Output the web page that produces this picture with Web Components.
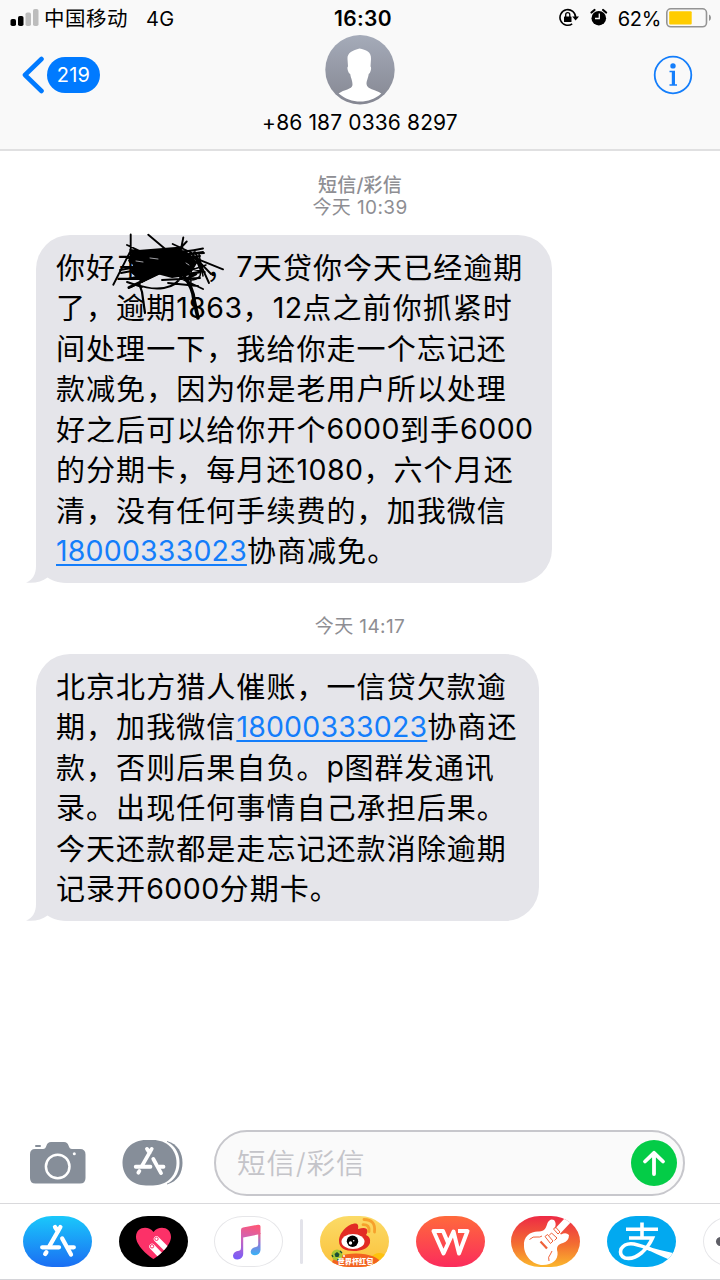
<!DOCTYPE html>
<html lang="zh-CN">
<head>
<meta charset="utf-8">
<title>+86 187 0336 8297</title>
<style>
  html, body { margin: 0; height: 100%; }
  body {
    width: 720px;
    height: 1280px;
    overflow: hidden;
    background: #fff;
    color: #000;
    font-family: Inter, "Noto Sans CJK SC", sans-serif;
  }
</style>
</head>
<body>
<message-screen>
  <status-bar slot="top" carrier="中国移动" network="4G" time="16:30" battery="62"></status-bar>
  <chat-header slot="top" unread="219">+86 187 0336 8297</chat-header>

  <time-stamp date="今天" time="10:39">短信/彩信</time-stamp>
  <message-bubble width="516">
    <p>你好王<hidden-name></hidden-name>，<lat-in>7</lat-in>天贷你今天已经逾期</p>
    <p>了，逾期<lat-in>1863</lat-in>，<lat-in>12</lat-in>点之前你抓紧时</p>
    <p>间处理一下，我给你走一个忘记还</p>
    <p>款减免，因为你是老用户所以处理</p>
    <p>好之后可以给你开个<lat-in>6000</lat-in>到手<lat-in>6000</lat-in></p>
    <p>的分期卡，每月还<lat-in>1080</lat-in>，六个月还</p>
    <p>清，没有任何手续费的，加我微信</p>
    <p><lat-in link>18000333023</lat-in>协商减免。</p>
    <pen-scribble slot="overlay"></pen-scribble>
  </message-bubble>

  <time-stamp date="今天" time="14:17"></time-stamp>
  <message-bubble width="503">
    <p>北京北方猎人催账，一信贷欠款逾</p>
    <p>期，加我微信<lat-in link>18000333023</lat-in>协商还</p>
    <p>款，否则后果自负。<lat-in>p</lat-in>图群发通讯</p>
    <p>录。出现任何事情自己承担后果。</p>
    <p>今天还款都是走忘记还款消除逾期</p>
    <p>记录开<lat-in>6000</lat-in>分期卡。</p>
  </message-bubble>

  <compose-bar slot="bottom">短信/彩信</compose-bar>
  <app-strip slot="bottom">
    <app-pill name="store"></app-pill>
    <app-pill name="touch"></app-pill>
    <app-pill name="music"></app-pill>
    <strip-divider></strip-divider>
    <app-pill name="weibo"></app-pill>
    <app-pill name="wps"></app-pill>
    <app-pill name="garage"></app-pill>
    <app-pill name="alipay"></app-pill>
    <app-pill name="more"></app-pill>
  </app-strip>
</message-screen>

<script>
// Small helper: every element below only needs an open root with some markup.
function define(name, render) {
    window.customElements.define(name, class extends HTMLElement {
        constructor() {
            super();
            this._root = this.attachShadow({ mode: 'open' });
            this._root.innerHTML = render(this);
        }
    });
}

// "A" made of three rounded sticks, shared by the compose bar and the strip
const storeGlyph = `
    <g fill="none" stroke="#fff" stroke-width="4.3" stroke-linecap="round">
      <path d="M32 11L35 15.500M39.200 22.500L48 38.500M37.400 11L26.500 30M23.400 36.200L22.200 38"/>
      <path d="M19.200 31.300H36M46 31.300H50.800"/>
    </g>`;

define('message-screen', () => `
    <style>
      :host { display: flex; flex-direction: column; height: 1280px; }
      header { height: 149px; background: #f9f9f9; border-bottom: 2px solid #e0e0e1; flex: none; }
      main { flex: 1; min-height: 0; padding-top: 23px; }
    </style>
    <header><slot name="top"></slot></header>
    <main><slot></slot></main>
    <slot name="bottom"></slot>`);

define('status-bar', (el) => `
    <style>
      :host { display: grid; grid-template-columns: 1fr auto 1fr; height: 36px; align-items: center; font-size: 20px; }
      div { display: flex; align-items: center; }
      .left { padding-left: 10px; }
      .carrier { margin-left: 5px; padding-top: 2px; font-size: 20.500px; letter-spacing: .5px; line-height: 34px; }
      .net { margin-left: 18px; padding-top: 1px; letter-spacing: .4px; }
      .time { font-weight: 600; font-size: 21px; letter-spacing: .35px; padding: 1px 0 0 6px; }
      .right { justify-content: flex-end; padding-right: 8px; }
      .pct { margin: 0 5px 0 10px; padding-top: 1px; letter-spacing: -.3px; }
      svg { display: block; }
    </style>
    <div class="left">
      <svg width="29" height="18" viewBox="0 0 29 18">
        <rect x=".5" y="10" width="5.500" height="7" rx="1.800"/>
        <rect x="8" y="7" width="5.500" height="10" rx="1.800"/>
        <rect x="15.500" y="3.500" width="5.500" height="13.500" rx="1.800" fill="#bdbdbd"/>
        <rect x="23" y="0" width="5.500" height="17" rx="1.800" fill="#bdbdbd"/>
      </svg>
      <span class="carrier">${el.getAttribute('carrier')}</span>
      <span class="net">${el.getAttribute('network')}</span>
    </div>
    <span class="time">${el.getAttribute('time')}</span>
    <div class="right">
      <svg width="49" height="20" viewBox="0 0 49 20">
        <path d="M13.200 15.900A7.800 7.800 0 1 1 16.600 9.500" fill="none" stroke="#000" stroke-width="1.600"/>
        <path d="M13.200 8.500H20L16.600 12.500Z"/>
        <rect x="5" y="8.500" width="7.500" height="5.600" rx=".6"/>
        <path d="M6.700 9V6.700a2.050 2.050 0 0 1 4.100 0V9" fill="none" stroke="#000" stroke-width="1.300"/>
        <circle cx="39.800" cy="10.200" r="7.300"/>
        <path d="M32.500 4.500L35.500 2M47.100 4.500L44.100 2" stroke="#000" stroke-width="2.200" stroke-linecap="round"/>
        <path d="M40.300 5.500V10.500H36" fill="none" stroke="#f9f9f9" stroke-width="1.300"/>
      </svg>
      <span class="pct">${el.getAttribute('battery')}%</span>
      <svg width="46" height="20" viewBox="0 0 46 20">
        <rect x=".8" y=".8" width="39.700" height="18" rx="4" fill="none" stroke="#949494" stroke-width="1.600"/>
        <rect x="3.200" y="3.200" width="22.500" height="13.200" rx="1" fill="#fc0"/>
        <path d="M43 6.500Q45 7.500 45 9.800T43 13Z" fill="#949494"/>
      </svg>
    </div>`);

define('chat-header', (el) => `
    <style>
      :host { display: grid; grid-template-columns: 1fr auto 1fr; height: 113px; align-items: start; }
      .back { display: flex; align-items: center; padding: 20px 0 0 22px; gap: 3px; }
      .badge { width: 53px; height: 36px; border-radius: 18px; background: #007aff; color: #fff; font-size: 20px; line-height: 36px; text-align: center; letter-spacing: .2px; }
      .contact { display: flex; flex-direction: column; align-items: center; font-size: 21px; }
      .avatar { margin-top: -1px; }
      .name { margin-top: 5px; line-height: 26px; letter-spacing: .13px; }
      .info { justify-self: end; padding: 19px 27px 0 0; }
      svg { display: block; }
    </style>
    <div class="back">
      <svg width="22" height="38" viewBox="0 0 22 38"><path d="M19.500 3L3 19L19.500 35" fill="none" stroke="#007aff" stroke-width="4.600" stroke-linecap="round" stroke-linejoin="round"/></svg>
      <span class="badge">${el.getAttribute('unread')}</span>
    </div>
    <div class="contact">
      <svg class="avatar" width="70" height="70" viewBox="0 0 70 70">
        <defs><linearGradient id="g" x2="0" y2="1"><stop stop-color="#a5abb9"/><stop offset="1" stop-color="#858792"/></linearGradient></defs>
        <circle cx="35" cy="34.700" r="34.700" fill="url(#g)"/>
        <path d="M22.500 24C22 17.500 28 15.500 34.500 13.500C41 15 46.500 16.500 46 24L45.500 31.500C47 32 45.500 38.500 43.700 39C43 44 41.500 45 41.500 49C42 54.500 50 54 56.300 58.500C44 69.500 26 69 13.600 58.500C19 54.500 27 54.500 27.500 50C27.500 45 26 44 25.200 39C23.300 38.500 21.500 32 23 31.500Z" fill="#fff"/>
      </svg>
      <span class="name"><slot></slot></span>
    </div>
    <svg class="info" width="40" height="40" viewBox="0 0 40 40">
      <circle cx="20" cy="20" r="18.300" fill="none" stroke="#147efb" stroke-width="1.800"/>
      <circle cx="20" cy="10.900" r="2.700" fill="#147efb"/>
      <path d="M16.500 15.800H22V29.300H24V30.700H16.500V29.300H18.800V17.200H16.500Z" fill="#147efb"/>
    </svg>`);

define('time-stamp', (el) => `
    <style>
      :host { display: flex; flex-direction: column; align-items: center; position: relative; top: 1px; color: #8e8e93; font-size: 19px; line-height: 22px; letter-spacing: .2px; }
      .label { font-weight: 500; }
      .when { letter-spacing: .4px; }
    </style>
    <span class="label"><slot></slot></span>
    <span class="when">${el.getAttribute('date')} ${el.getAttribute('time')}</span>`);

define('message-bubble', (el) => `
    <style>
      :host { display: block; position: relative; z-index: 0; box-sizing: border-box; width: ${el.getAttribute('width')}px; margin: 17px 0 32px 36px; padding: 13.500px 0 10.500px 20px; background: #e5e5ea; border-radius: 34px; font-size: 29px; line-height: 40.500px; letter-spacing: 1.060px; white-space: nowrap; }
      ::slotted(p) { margin: 0; height: 40.500px; }
      .tail { position: absolute; z-index: -1; left: -10px; bottom: 0; }
    </style>
    <svg class="tail" width="45" height="35" viewBox="0 0 45 35"><path d="M10 0V18C10 26 7 32 0 34.500C8 35.500 16 34 21.500 29.500C28 34 35 35 45 35V0Z" fill="#e5e5ea"/></svg>
    <slot></slot>
    <slot name="overlay"></slot>`);

// Digits and latin letters run on their own metrics inside a message.
// Kept on one line: a line break in the root would show up as a space in the text.
define('lat-in', () => '<style>' +
    ':host { position: relative; top: -1.500px; font-family: Inter, sans-serif; font-size: 28.500px; letter-spacing: .45px; }' +
    ':host([link]) { color: #147efb; text-decoration: underline; text-decoration-thickness: 1.500px; text-underline-offset: 3px; letter-spacing: .180px; }' +
    '</style><slot></slot>');

define('hidden-name', () => '<style>:host { display: inline-block; width: 60px; }</style>');

define('pen-scribble', () => `
    <style>
      :host { position: absolute; left: 69px; top: -5px; }
      svg { display: block; }
    </style>
    <svg width="125" height="95" viewBox="105 230 125 95" fill="none" stroke="#000" stroke-width="1.900" stroke-linecap="round" stroke-linejoin="round">
      <path d="M131.700 252L152 250L172 248L186 251L193 257L197 263L193 270L186 276L172 278L157 274L142 283L137 278L130 272L133 265L128 261Z" fill="#000" stroke="none"/>
      <path d="M130.700 234.500V257M148.300 234.700L170 253M183.300 237.500L180 254M186.700 241.500L176 253M172.700 244L190 252M127 245L142 252M130 250Q170 256 203 248.500M203 252L130 262M223 269.300L180 252M113.300 284.700L131 250M209 283L195 252M211 274L190 252"/>
      <path d="M120 270L200 256M121 273L180 262M128 279L198 262M127 258L204 253M131 287L160 273M127 282L142 287M136 284Q150 290 164 288Q177 286 182 275M162 280L200 278M168 283L198 286M180 278L203 289"/>
      <path d="M188 256Q204 260 200 276Q193 284 179 276M185 255L191 282M194 252L190 280M199 254L203 276M183 267L205 272M183 273L206 265" stroke-width="1.500"/>
      <path d="M196 258L201 270M184 275L200 272M190 262L199 262M186 279L196 274" stroke-width="2.600"/>
      <path d="M139 283L142 292L145 313" stroke-width="2.200"/>
      <path d="M184 276Q193 288 194 300L198 318" stroke-width="3.600"/>
      <path d="M129 287.500L170 268M132 252L182 248" stroke-width="3"/>
      <path d="M136 261L143 262M150 258L158 259M186 263L189 265" stroke="#c9c9cf" stroke-width=".8"/>
    </svg>`);

define('compose-bar', () => `
    <style>
      :host { display: flex; align-items: center; height: 80px; padding: 0 35px 0 29px; flex: none; }
      .apps { margin: 0 1px 0 35px; }
      .field { flex: 1; display: flex; align-items: center; justify-content: space-between; box-sizing: border-box; height: 66px; margin-left: 30px; padding: 0 6px 0 21px; border: 2px solid #c7c7cc; border-radius: 33px; background: #fafafa; color: #c4c4c9; font-size: 28.500px; font-weight: 350; letter-spacing: .9px; }
      .hint { padding-bottom: 3px; }
      svg { display: block; flex: none; }
    </style>
    <svg width="58" height="44" viewBox="0 0 58 44">
      <path d="M6 8H14Q16.500 8 17.500 4.500Q18.500 1 22 1H35Q38.500 1 39.500 4.500Q40.500 8 43 8H51Q56.500 8 56.500 13.500V37Q56.500 42.500 51 42.500H6.500Q1 42.500 1 37V13.500Q1 8 6 8Z" fill="#868e99"/>
      <rect x="6" y="4" width="6" height="2" rx="1" fill="#868e99"/>
      <circle cx="28.700" cy="25.500" r="11.800" fill="none" stroke="#fff" stroke-width="2.500"/>
      <circle cx="45.300" cy="12.800" r="1.500" fill="#fff"/>
    </svg>
    <svg class="apps" width="61" height="46" viewBox="0 0 61 46">
      <path d="M45 1C56 4 60.500 13 60.500 22.800S56 41.500 45 44.500Z" fill="#868e99"/>
      <path d="M36 0C48 0 57.500 9 57.500 22.800S48 45.500 36 45.500Z" fill="#fff"/>
      <path d="M24 0H31C44 0 54.500 9 54.500 22.800S44 45.500 31 45.500H24C10 45.500 .5 36 .5 22.800S10 0 24 0Z" fill="#868e99"/>
      <g transform="translate(-3.200 -.8) scale(.88)">${storeGlyph}</g>
    </svg>
    <div class="field">
      <span class="hint"><slot></slot></span>
      <svg width="46" height="46" viewBox="0 0 46 46">
        <circle cx="23" cy="23" r="23" fill="#04cc47"/>
        <path d="M23 34V13M14 21.500L23 12.800L32 21.500" fill="none" stroke="#fff" stroke-width="3.800" stroke-linecap="round" stroke-linejoin="round"/>
      </svg>
    </div>`);

define('app-strip', () => `
    <style>
      :host { display: flex; align-items: center; box-sizing: border-box; height: 77px; padding-left: 23px; gap: 26.650px; flex: none; border-top: 1px solid #d9d9dc; border-bottom: 1px solid #d4d4d8; overflow: hidden; }
    </style><slot></slot>`);

define('strip-divider', () => `
    <style>:host { width: 3px; height: 45px; margin: 0 -9.600px 0 -9.900px; border-radius: 2px; background: #e3e3ea; flex: none; }</style>`);

// Artwork of each pill, drawn on a 69 x 51 canvas
const art = {
    store: `
      <defs><linearGradient id="g" x2="0" y2="1"><stop stop-color="#1ac8fb"/><stop offset="1" stop-color="#1b6ef3"/></linearGradient></defs>
      <rect width="69" height="51" fill="url(#g)"/>${storeGlyph}`,
    touch: `
      <rect width="69" height="51"/>
      <defs><clipPath id="h"><path id="heart" d="M34.500 43C28 39 17 29 17 21C17 11 29 9 34.500 16C40 9 52 11 52 21C52 29 41 39 34.500 43Z"/></clipPath></defs>
      <use href="#heart" fill="#fc3168"/>
      <g clip-path="url(#h)" stroke="#fff" stroke-width="5.500" stroke-linecap="round"><path d="M33 30.500L43 41M37.500 23L51 36.500"/></g>
      <g fill="#fff" stroke="#fc3168" stroke-width="1"><circle cx="33" cy="30.300" r="1.700"/><circle cx="37.500" cy="22.800" r="1.700"/></g>`,
    music: `
      <defs><linearGradient id="g" gradientUnits="userSpaceOnUse" x1="38" y1="9" x2="30" y2="44"><stop stop-color="#fc5778"/><stop offset=".45" stop-color="#c964bd"/><stop offset="1" stop-color="#795df8"/></linearGradient>
      <linearGradient id="b" x2="0" y2="1"><stop stop-color="#f45c83"/><stop offset=".5" stop-color="#8a7bd8"/><stop offset="1" stop-color="#35b4f8"/></linearGradient></defs>
      <path d="M27 14Q27 12 29 11.600L44 8.700Q46.500 8.300 46.500 10.500V18L29.200 21.500V38Q29 43 23.500 43.400Q19 43.500 19 39.500Q19.500 35.500 25 34.800Q27 34.500 27 32Z" fill="url(#g)"/>
      <path d="M44.200 17.500L46.500 17V34Q46 39 41 39.300Q36.700 39.300 36.700 35.500Q37.300 31.800 42 31Q44.200 30.600 44.200 28.500Z" fill="url(#b)"/>`,
    weibo: `
      <defs><linearGradient id="g" x2="0" y2="1"><stop stop-color="#fbdb67"/><stop offset="1" stop-color="#fbc13b"/></linearGradient></defs>
      <rect width="69" height="51" fill="url(#g)"/>
      <path d="M50 42Q59 32 69 42V51H45Z" fill="#fdc20f"/>
      <ellipse cx="36" cy="47" rx="24" ry="9.500" fill="#f2621f"/>
      <path d="M19 25C19 16 29 7 36 7.500Q39 8 38 13Q47 10 47.500 15Q47.500 17 46 19Q51 21 50 27C48 33 41 35 34 35C25 35 19 32 19 25Z" fill="#e22b24"/>
      <ellipse cx="33" cy="25.500" rx="11.500" ry="7.500" fill="#fff"/>
      <circle cx="32.500" cy="25.300" r="5.700"/>
      <circle cx="30.500" cy="27" r="1.700" fill="#fff"/><circle cx="33.700" cy="24.800" r=".8" fill="#fff"/>
      <path d="M43 8.700Q50 8.500 49 15.500M44 3.500Q56 3.500 54.500 16" fill="none" stroke="#f6a12c" stroke-width="2.800" stroke-linecap="round"/>
      <circle cx="17" cy="39" r="5.500" fill="#a9c532"/><path d="M14.500 38L17 36L19.500 38L18.500 41H15.500Z" fill="#174d37"/>
      <path d="M12 39L13 41M20 35L22 37M17 44H19" stroke="#174d37" stroke-width="1.300"/>
      <circle cx="24" cy="40" r="1" fill="#fff"/>
      <text x="17.500" y="48" fill="#fff" font-family="Noto Sans CJK SC, sans-serif" font-size="7.200" font-weight="900">世界杯红包</text>`,
    wps: `
      <defs><linearGradient id="g" x2="0" y2="1"><stop stop-color="#ff6a3c"/><stop offset="1" stop-color="#fb2c5c"/></linearGradient></defs>
      <rect width="69" height="51" fill="url(#g)"/>
      <path d="M32.500 28L27 15H17.500L27.500 37.500L37.500 15.500L43 37.500L51.500 15H42" fill="none" stroke="#fff" stroke-width="4" stroke-linejoin="round"/>`,
    garage: `
      <defs><linearGradient id="g" x2="0" y2="1"><stop stop-color="#ed2a45"/><stop offset=".55" stop-color="#f36d32"/><stop offset="1" stop-color="#fbb72d"/></linearGradient></defs>
      <rect width="69" height="51" fill="url(#g)"/>
      <path d="M42 20L58 3" stroke="#fff" stroke-width="7"/>
      <path d="M13 30C12 20 20 15 28 15.500C34 15 35 12 36.500 7Q39 2 43 4Q46 7 43.500 13L50 18.500Q55 16 58 19Q58 25 52 27C47 28 45 31 46.500 36C47.500 44 41 49 32 49C21 49 13 39 13 30Z" fill="#fff"/>
      <g fill="none" stroke="#ef6139" stroke-width="1"><path d="M18.500 23.500Q22 20 26 21Q29 21.500 31 20M38 45Q36.500 41 39.500 38L41 35"/><path d="M34 20.500L36.500 18.500L42 25L39.500 27.500ZM42.500 13L44.500 11L49 16L47 18ZM38 19.500L40.500 17L46 22L43.500 24.500"/><path d="M29.500 25.500L36 32.500" stroke-width="2.200"/></g>`,
    alipay: `
      <rect width="69" height="51" fill="#02a9f0"/>
      <path d="M19 13.200H51M35 6.500V21M22 22H45.500Q42 30 35 36.500Q26 44 18 42Q12 39.500 14 33Q18 26.500 27 28Q34 29.500 44 33.500" fill="none" stroke="#fff" stroke-width="3.600"/>
      <path d="M40 30.500Q52 34 66 37L62 43.500Q50 38.500 39 33Z" fill="#fff"/>`,
    more: `<circle cx="17.500" cy="25.500" r="4.500" fill="#5e5e66"/><circle cx="34.500" cy="25.500" r="4.500" fill="#5e5e66"/><circle cx="51.500" cy="25.500" r="4.500" fill="#5e5e66"/>`,
};

define('app-pill', (el) => {
    const name = el.getAttribute('name');
    const ring = name === 'music' || name === 'more' ? 'box-shadow: inset 0 0 0 1px #e6e6e9;' : '';

    return `
    <style>
      :host { width: 69px; height: 51px; flex: none; border-radius: 29px / 25.500px; overflow: hidden; ${ring} }
      svg { display: block; }
    </style>
    <svg width="69" height="51" viewBox="0 0 69 51">${art[name]}</svg>`;
});
</script>
</body>
</html>
